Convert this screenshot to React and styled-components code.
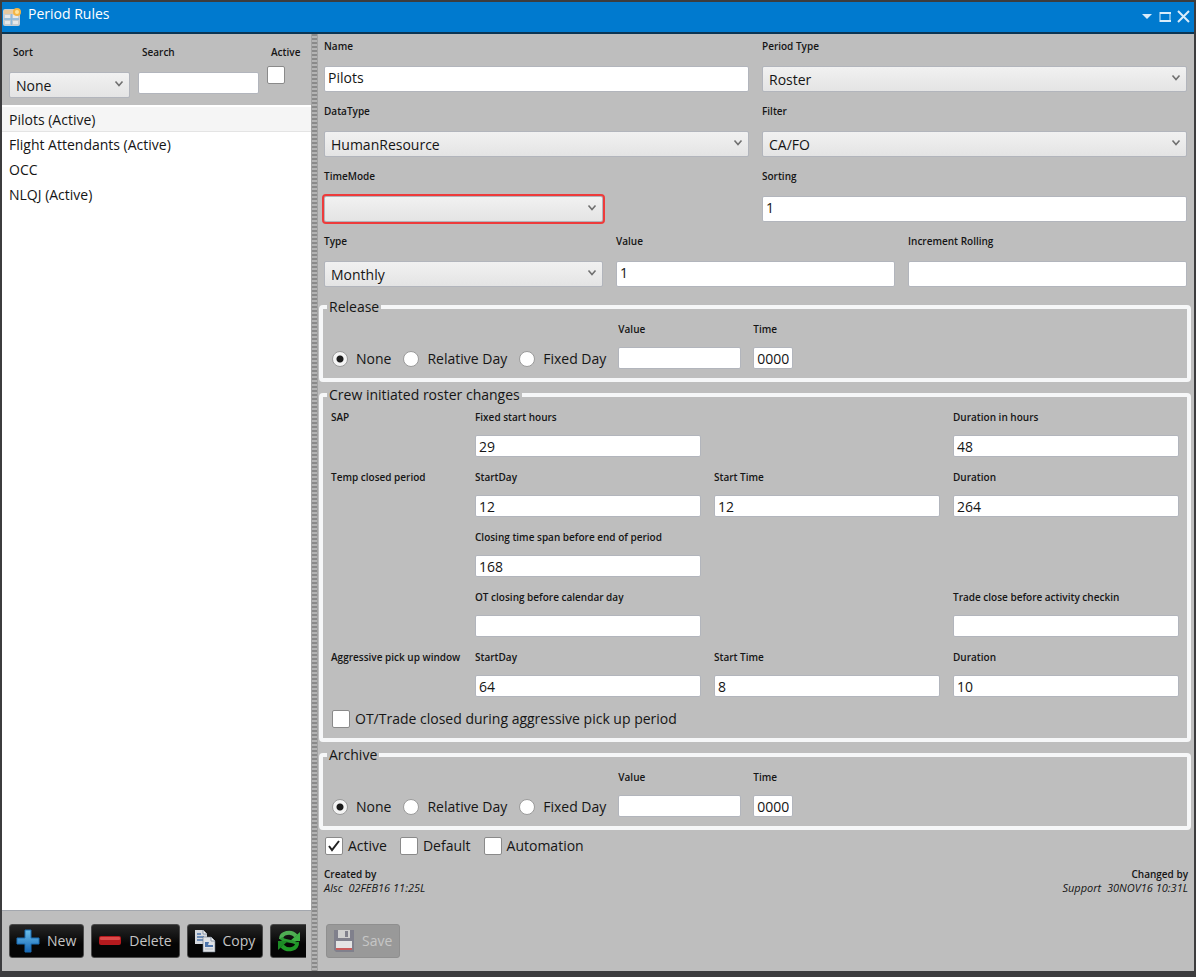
import React, { useId } from 'react';
import styled, { createGlobalStyle, css } from 'styled-components';

const GlobalStyle = createGlobalStyle`
  * {
    box-sizing: border-box;
  }

  body {
    margin: 0;
    background: #bebebe;
    color: #151515;
    font-family: 'Open Sans', 'Noto Sans', sans-serif;
    font-size: 14px;
    line-height: 20px;
  }

  button, input, select {
    font: inherit;
    color: inherit;
    margin: 0;
  }
`;

const Window = styled.div`
  display: flex;
  flex-direction: column;
  min-height: 100vh;
  border: solid #3c3c3e;
  border-width: 2px 2px 6px;
`;

const TitleBar = styled.header`
  display: flex;
  align-items: center;
  height: 32px;
  padding: 0 4px 0 0;
  background: #007acf;
  border-bottom: 2px solid #0a3554;
  color: #fff;
`;

const Title = styled.h1`
  flex: 1;
  margin: 0 0 6px 6px;
  font-size: 14px;
  font-weight: 400;
  line-height: 18px;
`;

const WindowButton = styled.button`
  display: flex;
  padding: 0;
  margin-left: 4px;
  border: 0;
  background: none;
  color: #d9ecfa;
`;

const Body = styled.div`
  display: flex;
  flex: 1;
`;

const Sidebar = styled.aside`
  display: flex;
  flex-direction: column;
  flex: 0 0 309px;
  min-width: 0;
`;

const Splitter = styled.div`
  flex: 0 0 7px;
  background: repeating-linear-gradient(#8a8a8a 0 2px, #b4b4b4 2px 4px);
  border-left: 1px solid #a2a2a2;
  border-right: 1px solid #a2a2a2;
`;

const FilterBar = styled.div`
  display: flex;
  gap: 8px;
  height: 71px;
  padding: 10px 7px 0;
`;

const FilterField = styled.div`
  display: flex;
  flex-direction: column;
  flex: ${props => (props.$narrow ? '0 0 37px' : '1 1 0')};
  min-width: 0;
  gap: ${props => (props.$narrow ? 6 : 12)}px;
`;

const List = styled.ul`
  flex: 1;
  margin: 0;
  padding: 2px 0 0;
  list-style: none;
  background: #fff;
  border-bottom: 1px solid #a3a7ae;
`;

const ListItem = styled.li`
  height: 25px;
  padding: 3px 7px 1px;
  background: ${props => (props.$selected ? '#f5f5f5' : '#fff')};
  border-bottom: 1px solid ${props => (props.$selected ? '#e4e4e4' : '#fff')};
`;

const Toolbar = styled.div`
  display: flex;
  gap: 7px;
  height: 60px;
  margin: 0 5px 0 7px;
  padding-top: 13px;
  overflow: hidden;
`;

const ToolButton = styled.button`
  display: flex;
  align-items: center;
  flex: none;
  gap: 7px;
  height: 34px;
  padding: 0 7px 0 6px;
  border: 1px solid #4a4a4a;
  border-radius: 3px;
  background: linear-gradient(#262626, #050505 60%);
  color: #c4c4c4;

  &:disabled {
    background: #999;
    border-color: #8f8f8f;
    color: #c6c6c6;
  }
`;

const Form = styled.main`
  flex: 1;
  min-width: 0;
  padding: 4px 3px 0 1px;
`;

const FieldGrid = styled.div`
  display: grid;
  grid-template-columns: repeat(6, 1fr);
  gap: 11px 13px;
  padding: 0 4px 0 5px;
`;

const Field = styled.div`
  display: flex;
  flex-direction: column;
  gap: 12px;
  min-width: 0;
  grid-column: span ${props => props.$span || 1};
`;

const labelText = css`
  font-size: 10px;
  font-weight: 600;
  line-height: 16px;
  white-space: nowrap;
`;

const Label = styled.label`
  ${labelText}
  padding-left: ${props => (props.$indented ? 4 : 0)}px;
`;

const RowTitle = styled.span`
  ${labelText}
`;

const TextBox = styled.input`
  width: 100%;
  height: ${props => (props.$tall ? 26 : 22)}px;
  padding: ${props => (props.$tall ? '0 3px 4px' : '0 3px')};
  border: 1px solid #b2b5bc;
  border-radius: 2px;
  background: #fff;
`;

const SelectWrap = styled.div`
  position: relative;
  border-radius: 2px;
  outline: ${props => (props.$invalid ? '2px solid #ee3b3b' : 'none')};
`;

const SelectBox = styled.select`
  display: block;
  width: 100%;
  height: 26px;
  padding: 1px 20px 0 6px;
  border: 1px solid #b2b5bc;
  border-radius: 2px;
  background: linear-gradient(#f1f1f1, #e4e4e4);
  appearance: none;
`;

const Chevron = styled.svg`
  position: absolute;
  top: 8px;
  right: 6px;
  pointer-events: none;
`;

const Group = styled.fieldset`
  min-width: 0;
  margin: ${props => (props.$first ? '10px' : '3px')} 0 0;
  padding: 4px 8px 9px;
  border: 4px solid #f6f7f8;
  border-radius: 4px;
`;

const Legend = styled.legend`
  margin-left: -4px;
  padding: 0 2px;
  height: 20px;
`;

const OptionRow = styled.div`
  display: flex;
  align-items: flex-end;
  gap: 12px;
  padding-left: 1px;
`;

const SmallField = styled.div`
  display: flex;
  flex-direction: column;
  gap: 10px;
  width: ${props => (props.$time ? 40 : 123)}px;
`;

const Option = styled.label`
  display: flex;
  align-items: center;
  gap: ${props => (props.$wide ? 8 : 5)}px;
  white-space: nowrap;
`;

const Radio = styled.input`
  appearance: none;
  width: 16px;
  height: 16px;
  border: 1px solid #9b9b9b;
  border-radius: 50%;
  background: #fff;

  &:checked {
    background: radial-gradient(circle, #1c1c1c 0 3px, #f4f4f4 4px);
  }
`;

const CheckBox = styled.input`
  appearance: none;
  width: 18px;
  height: 18px;
  border: 1px solid #8a8a8a;
  border-radius: 2px;
  background: #fff;

  &:checked {
    background: #fff
      url("data:image/svg+xml,%3Csvg xmlns='http://www.w3.org/2000/svg' viewBox='0 0 16 16'%3E%3Cpath d='M3 8l3 4 7-9' fill='none' stroke='%23222' stroke-width='2'/%3E%3C/svg%3E")
      center / 16px no-repeat;
  }
`;

const CrewGrid = styled.div`
  display: grid;
  grid-template-columns: 131px repeat(3, 1fr);
  gap: 12px 13px;
`;

const CrewField = styled.div`
  display: flex;
  flex-direction: column;
  gap: 10px;
  min-width: 0;
  grid-column: ${props => props.$column};
`;

const CrewOption = styled.div`
  margin-top: 12px;
  padding-left: 1px;
`;

const Flags = styled.div`
  display: flex;
  gap: 13px;
  padding: 6px 6px 0;
`;

const Audit = styled.div`
  display: flex;
  justify-content: space-between;
  padding: 11px 3px 0 5px;
  font-size: 10px;
  font-weight: 600;
  line-height: 14px;

  em {
    font-size: 11px;
    font-weight: 400;
  }
`;

const AuditEntry = styled.div`
  text-align: ${props => props.$align || 'left'};
`;

const SaveRow = styled.div`
  padding: 29px 7px 11px;
`;

const Select = ({ id, value, invalid }) => (
  <SelectWrap $invalid={invalid}>
    <SelectBox id={id} defaultValue={value}>
      <option>{value}</option>
    </SelectBox>
    <Chevron width="10" height="8" viewBox="0 0 10 8">
      <path d="M1.5 1.5L5 5.5L8.5 1.5" fill="none" stroke="#707070" strokeWidth="1.6" />
    </Chevron>
  </SelectWrap>
);

const FormField = ({ label, value = '', span, select, invalid }) => {
  const id = useId();
  return (
    <Field $span={span}>
      <Label htmlFor={id}>{label}</Label>
      {select ? (
        <Select id={id} value={value} invalid={invalid} />
      ) : (
        <TextBox id={id} $tall defaultValue={value} />
      )}
    </Field>
  );
};

const CrewInput = ({ label, value = '', column }) => {
  const id = useId();
  return (
    <CrewField $column={column}>
      <Label htmlFor={id}>{label}</Label>
      <TextBox id={id} defaultValue={value} />
    </CrewField>
  );
};

const ScheduleGroup = ({ title, name, first }) => {
  const id = useId();
  return (
    <Group $first={first}>
      <Legend>{title}</Legend>
      <OptionRow>
        {['None', 'Relative Day', 'Fixed Day'].map((option, i) => (
          <Option key={option} $wide>
            <Radio type="radio" name={name} defaultChecked={i === 0} />
            {option}
          </Option>
        ))}
        <SmallField>
          <Label htmlFor={`${id}-value`}>Value</Label>
          <TextBox id={`${id}-value`} />
        </SmallField>
        <SmallField $time>
          <Label htmlFor={`${id}-time`}>Time</Label>
          <TextBox id={`${id}-time`} defaultValue="0000" />
        </SmallField>
      </OptionRow>
    </Group>
  );
};

const AppIcon = () => (
  <svg width="20" height="20" viewBox="0 0 20 20">
    <rect x="1" y="2" width="17" height="17" rx="2" fill="#c9cdd0" />
    <rect x="2" y="3" width="15" height="4" fill="#e6c9a0" />
    <path d="M2 12h15M9.5 7v11" stroke="#8db9dc" strokeWidth="1.5" />
    <path d="M3 8h5v3H3zM11 8h5v3h-5zM3 14h5v3H3zM11 14h5v3h-5z" fill="#e8e8e8" />
    <circle cx="15" cy="5" r="4" fill="#f6b544" />
    <circle cx="15" cy="5" r="2" fill="#fde3a0" />
  </svg>
);

const PlusIcon = () => (
  <svg width="24" height="24" viewBox="0 0 24 24">
    <defs>
      <linearGradient id="plus" x1="0" y1="0" x2="0" y2="1">
        <stop offset="0" stopColor="#6cc0ec" />
        <stop offset="1" stopColor="#1565b4" />
      </linearGradient>
    </defs>
    <path d="M9 1h6v8h8v6h-8v8H9v-8H1V9h8z" fill="url(#plus)" stroke="#1b6fb5" />
  </svg>
);

const MinusIcon = () => (
  <svg width="24" height="24" viewBox="0 0 24 24">
    <rect x="1" y="7" width="22" height="9" rx="2" fill="#b51a1e" />
    <rect x="2" y="8" width="20" height="3" rx="1" fill="#dd4a4a" />
  </svg>
);

const CopyIcon = () => (
  <svg width="22" height="24" viewBox="0 0 22 24">
    <path d="M1 1h8l4 4v10H1z" fill="#d5d9df" />
    <path d="M9 1v4h4" fill="#f5f5f5" stroke="#8894a5" />
    <path d="M3 5h4M3 8h7M3 11h7" stroke="#4c74ab" strokeWidth="1.5" />
    <path d="M9 8h8l4 4v11H9z" fill="#dfe2e6" stroke="#6a7380" strokeWidth=".6" />
    <path d="M17 8v4h4" fill="#fff" stroke="#8894a5" />
    <path d="M11 13h4l-1 3h5v2h-8z" fill="#4c74ab" />
    <path d="M11 20h8" stroke="#b4bac3" />
  </svg>
);

const RefreshIcon = () => (
  <svg width="24" height="24" viewBox="0 0 24 24">
    <path d="M4 10C4 4 14 1 19 7" fill="none" stroke="#4fae53" strokeWidth="4" />
    <path d="M23 3v9h-10z" fill="#3eb044" />
    <path d="M4 9c3 4 9 2 15 5" fill="none" stroke="#2a9a32" strokeWidth="3" />
    <path d="M20 13c1 7-9 10-15 4" fill="none" stroke="#1f9a27" strokeWidth="4" />
    <path d="M1 21v-9h10z" fill="#1d8a25" />
  </svg>
);

const SaveIcon = () => (
  <svg width="22" height="24" viewBox="0 0 22 24">
    <path d="M1 1h20v22H3l-2-2z" fill="#80808c" />
    <rect x="5" y="1" width="12" height="8" fill="#cfcfcf" />
    <rect x="12" y="2" width="3" height="6" fill="#80808c" />
    <rect x="3" y="12" width="16" height="9" fill="#e4e4e4" />
    <rect x="3" y="19" width="16" height="2" fill="#c95b5b" />
  </svg>
);

const rules = ['Pilots (Active)', 'Flight Attendants (Active)', 'OCC', 'NLQJ (Active)'];

const App = () => (
  <>
    <GlobalStyle />
    <Window>
      <TitleBar>
        <AppIcon />
        <Title>Period Rules</Title>
        <WindowButton aria-label="Menu">
          <svg width="14" height="14" viewBox="0 0 14 14">
            <path d="M2 4h10l-5 5z" fill="currentColor" />
          </svg>
        </WindowButton>
        <WindowButton aria-label="Maximize">
          <svg width="14" height="14" viewBox="0 0 14 14">
            <path d="M2 3h11M2 11h11" stroke="currentColor" strokeWidth="2" />
            <path d="M2 2v10M12 2v10" stroke="currentColor" />
          </svg>
        </WindowButton>
        <WindowButton aria-label="Close">
          <svg width="14" height="14" viewBox="0 0 14 14">
            <path d="M2 1l11 11M13 1L2 12" stroke="currentColor" strokeWidth="2" />
          </svg>
        </WindowButton>
      </TitleBar>
      <Body>
        <Sidebar>
          <FilterBar>
            <FilterField>
              <Label htmlFor="sort" $indented>Sort</Label>
              <Select id="sort" value="None" />
            </FilterField>
            <FilterField>
              <Label htmlFor="search" $indented>Search</Label>
              <TextBox id="search" />
            </FilterField>
            <FilterField $narrow>
              <Label htmlFor="only-active" $indented>Active</Label>
              <CheckBox type="checkbox" id="only-active" />
            </FilterField>
          </FilterBar>
          <List>
            {rules.map((rule, i) => (
              <ListItem key={rule} $selected={i === 0}>
                {rule}
              </ListItem>
            ))}
          </List>
          <Toolbar>
            <ToolButton>
              <PlusIcon />
              New
            </ToolButton>
            <ToolButton>
              <MinusIcon />
              Delete
            </ToolButton>
            <ToolButton>
              <CopyIcon />
              Copy
            </ToolButton>
            <ToolButton aria-label="Refresh">
              <RefreshIcon />
            </ToolButton>
          </Toolbar>
        </Sidebar>
        <Splitter />
        <Form>
          <FieldGrid>
            <FormField label="Name" value="Pilots" span={3} />
            <FormField label="Period Type" value="Roster" span={3} select />
            <FormField label="DataType" value="HumanResource" span={3} select />
            <FormField label="Filter" value="CA/FO" span={3} select />
            <FormField label="TimeMode" span={2} select invalid />
            <span />
            <FormField label="Sorting" value="1" span={3} />
            <FormField label="Type" value="Monthly" span={2} select />
            <FormField label="Value" value="1" span={2} />
            <FormField label="Increment Rolling" span={2} />
          </FieldGrid>

          <ScheduleGroup title="Release" name="release" first />

          <Group>
            <Legend>Crew initiated roster changes</Legend>
            <CrewGrid>
              <RowTitle>SAP</RowTitle>
              <CrewInput label="Fixed start hours" value="29" column={2} />
              <CrewInput label="Duration in hours" value="48" column={4} />
              <RowTitle>Temp closed period</RowTitle>
              <CrewInput label="StartDay" value="12" column={2} />
              <CrewInput label="Start Time" value="12" column={3} />
              <CrewInput label="Duration" value="264" column={4} />
              <CrewInput label="Closing time span before end of period" value="168" column={2} />
              <CrewInput label="OT closing before calendar day" column={2} />
              <CrewInput label="Trade close before activity checkin" column={4} />
              <RowTitle>Aggressive pick up window</RowTitle>
              <CrewInput label="StartDay" value="64" column={2} />
              <CrewInput label="Start Time" value="8" column={3} />
              <CrewInput label="Duration" value="10" column={4} />
            </CrewGrid>
            <CrewOption>
              <Option>
                <CheckBox type="checkbox" />
                OT/Trade closed during aggressive pick up period
              </Option>
            </CrewOption>
          </Group>

          <ScheduleGroup title="Archive" name="archive" />

          <Flags>
            <Option>
              <CheckBox type="checkbox" defaultChecked />
              Active
            </Option>
            <Option>
              <CheckBox type="checkbox" />
              Default
            </Option>
            <Option>
              <CheckBox type="checkbox" />
              Automation
            </Option>
          </Flags>
          <Audit>
            <AuditEntry>
              Created by
              <br />
              <em>Alsc&nbsp; 02FEB16 11:25L</em>
            </AuditEntry>
            <AuditEntry $align="right">
              Changed by
              <br />
              <em>Support&nbsp; 30NOV16 10:31L</em>
            </AuditEntry>
          </Audit>
          <SaveRow>
            <ToolButton disabled>
              <SaveIcon />
              Save
            </ToolButton>
          </SaveRow>
        </Form>
      </Body>
    </Window>
  </>
);

export default App;
